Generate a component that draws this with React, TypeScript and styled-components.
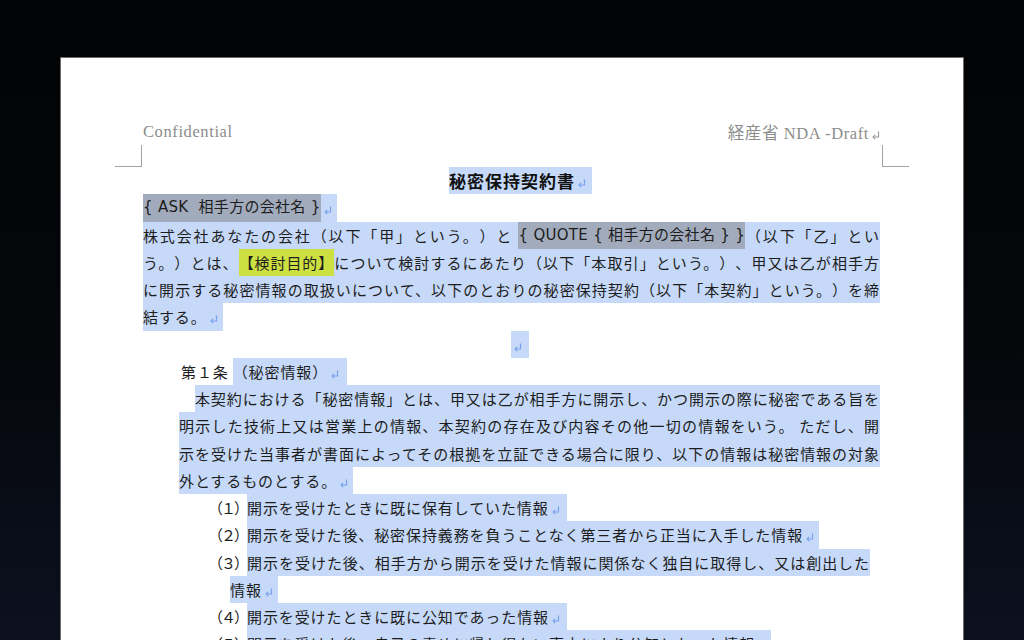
import styled, { createGlobalStyle } from 'styled-components';

const GlobalStyle = createGlobalStyle`
  html, body {
    margin: 0;
    height: 100%;
  }
  body {
    overflow: hidden;
    background: linear-gradient(180deg, #020304 0%, #05070b 55%, #0c1120 100%);
    font-family: 'Noto Sans CJK JP', 'Noto Sans', sans-serif;
  }
`;

const SEL = '#c6d9f8';
const LINE_H = 27.25;

const Screen = styled.div`
  width: 1024px;
  height: 640px;
  overflow: hidden;
  box-sizing: border-box;
  padding: 57px 0 0 60px;
`;

const Page = styled.div`
  width: 904px;
  min-height: 700px;
  box-sizing: border-box;
  background: #ffffff;
  border: 1px solid #6c6c6c;
  border-bottom: none;
  padding: 65px 83px 0 82px;
`;

const HeaderRow = styled.div`
  display: flex;
  justify-content: space-between;
  align-items: flex-start;
`;

const HeaderCol = styled.div<{ $side: 'left' | 'right' }>`
  display: flex;
  flex-direction: column;
  align-items: ${(p) => (p.$side === 'left' ? 'flex-start' : 'flex-end')};
`;

const HeaderText = styled.div`
  display: flex;
  align-items: center;
  height: 18px;
  font-family: 'Liberation Serif', 'Noto Sans CJK JP', serif;
  font-size: 16.5px;
  letter-spacing: 0.6px;
  color: #8c8c8c;
  white-space: pre;
`;

const CropMark = styled.div<{ $side: 'left' | 'right' }>`
  width: 26px;
  height: 21px;
  margin-top: 4px;
  border-style: solid;
  border-color: #a3a3a3;
  border-width: ${(p) => (p.$side === 'left' ? '0 1px 1px 0' : '0 0 1px 1px')};
  margin-left: ${(p) => (p.$side === 'left' ? '-28px' : '0')};
  margin-right: ${(p) => (p.$side === 'right' ? '-29px' : '0')};
`;

const Doc = styled.div`
  display: flex;
  flex-direction: column;
  color: #1d1d1d;
  font-size: 15px;
  letter-spacing: 0.9px;
  text-spacing-trim: space-all;
`;

const Line = styled.div<{ $indent?: number; $right?: number }>`
  display: flex;
  align-items: stretch;
  height: ${LINE_H}px;
  padding-left: ${(p) => p.$indent ?? 0}px;
  padding-right: ${(p) => p.$right ?? 0}px;
`;

const Plain = styled.span<{ $pad?: number }>`
  display: flex;
  align-items: center;
  white-space: pre;
  padding-right: ${(p) => p.$pad ?? 0}px;
`;

const Sel = styled.span<{ $pad?: number }>`
  display: flex;
  align-items: center;
  white-space: pre;
  background: ${SEL};
  padding-right: ${(p) => p.$pad ?? 0}px;
`;

const SelFill = styled.div`
  flex: 1;
  min-width: 0;
  height: ${LINE_H}px;
  overflow: hidden;
  line-height: ${LINE_H}px;
  background: ${SEL};
  text-align: justify;
  text-align-last: justify;
  text-justify: inter-character;
`;

const Field = styled.span`
  display: inline-block;
  vertical-align: top;
  line-height: ${LINE_H}px;
  background: #a2abbb;
  font-family: 'DejaVu Sans', 'Noto Sans CJK JP', sans-serif;
  letter-spacing: 0.3px;
  white-space: pre;
`;

const Marker = styled.span`
  display: inline-block;
  vertical-align: top;
  line-height: ${LINE_H}px;
  background: #cde042;
`;

const Title = styled.span`
  font-size: 17px;
  font-weight: 700;
  letter-spacing: 1px;
  color: #111;
`;

const ListLabel = styled.span`
  display: flex;
  align-items: center;
  letter-spacing: -2px;
`;

const MarkIcon = styled.svg<{ $color?: string }>`
  flex: none;
  width: 8px;
  height: 9px;
  margin: 6px 0 0 3px;
  fill: none;
  stroke: ${(p) => p.$color ?? '#78a2ec'};
  stroke-width: 1.2;
`;

function Mark({ color }: { color?: string }) {
  return (
    <MarkIcon $color={color} viewBox='0 0 8 9'>
      <path d='M6.5 0.5V6H1.2' />
      <path d='M3.2 3.9L1.1 6L3.2 8.1' />
    </MarkIcon>
  );
}

function App() {
  return (
    <>
      <GlobalStyle />
      <Screen>
        <Page>
          <HeaderRow>
            <HeaderCol $side='left'>
              <HeaderText>Confidential</HeaderText>
              <CropMark $side='left' />
            </HeaderCol>
            <HeaderCol $side='right'>
              <HeaderText>
                経産省 NDA -Draft
                <Mark color='#9a9a9a' />
              </HeaderText>
              <CropMark $side='right' />
            </HeaderCol>
          </HeaderRow>

          <Doc>
            <Line $indent={306}>
              <Sel $pad={6}>
                <Title>秘密保持契約書</Title>
                <Mark />
              </Sel>
            </Line>

            <Line>
              <Sel $pad={5}>
                <Field>{'{ ASK  相手方の会社名 }'}</Field>
                <Mark />
              </Sel>
            </Line>
            <Line>
              <SelFill>
                株式会社あなたの会社（以下「甲」という。）と <Field>{'{ QUOTE { 相手方の会社名 } }'}</Field>（以下「乙」とい
              </SelFill>
            </Line>
            <Line>
              <SelFill>
                う。）とは、<Marker>【検討目的】</Marker>について検討するにあたり（以下「本取引」という。）、甲又は乙が相手方
              </SelFill>
            </Line>
            <Line>
              <SelFill>に開示する秘密情報の取扱いについて、以下のとおりの秘密保持契約（以下「本契約」という。）を締</SelFill>
            </Line>
            <Line>
              <Sel $pad={5}>
                結する。
                <Mark />
              </Sel>
            </Line>

            <Line $indent={368}>
              <Sel $pad={7}>
                <Mark />
              </Sel>
            </Line>

            <Line $indent={38}>
              <Plain $pad={4}>第１条</Plain>
              <Sel $pad={8}>
                （秘密情報）
                <Mark />
              </Sel>
            </Line>
            <Line $indent={36}>
              <Plain>　</Plain>
              <SelFill>本契約における「秘密情報」とは、甲又は乙が相手方に開示し、かつ開示の際に秘密である旨を</SelFill>
            </Line>
            <Line $indent={36}>
              <SelFill>明示した技術上又は営業上の情報、本契約の存在及び内容その他一切の情報をいう。 ただし、開</SelFill>
            </Line>
            <Line $indent={36}>
              <SelFill>示を受けた当事者が書面によってその根拠を立証できる場合に限り、以下の情報は秘密情報の対象</SelFill>
            </Line>
            <Line $indent={36}>
              <Sel $pad={5}>
                外とするものとする。
                <Mark />
              </Sel>
            </Line>

            <Line $indent={65}>
              <ListLabel>（１）</ListLabel>
              <Sel $pad={7}>
                開示を受けたときに既に保有していた情報
                <Mark />
              </Sel>
            </Line>
            <Line $indent={65}>
              <ListLabel>（２）</ListLabel>
              <Sel $pad={5}>
                開示を受けた後、秘密保持義務を負うことなく第三者から正当に入手した情報
                <Mark />
              </Sel>
            </Line>
            <Line $indent={65} $right={10}>
              <ListLabel>（３）</ListLabel>
              <SelFill>開示を受けた後、相手方から開示を受けた情報に関係なく独自に取得し、又は創出した</SelFill>
            </Line>
            <Line $indent={87}>
              <Sel $pad={5}>
                情報
                <Mark />
              </Sel>
            </Line>
            <Line $indent={65}>
              <ListLabel>（４）</ListLabel>
              <Sel $pad={7}>
                開示を受けたときに既に公知であった情報
                <Mark />
              </Sel>
            </Line>
            <Line $indent={65}>
              <ListLabel>（５）</ListLabel>
              <Sel $pad={5}>
                開示を受けた後、自己の責めに帰し得ない事由により公知となった情報
                <Mark />
              </Sel>
            </Line>
          </Doc>
        </Page>
      </Screen>
    </>
  );
}

export default App;
